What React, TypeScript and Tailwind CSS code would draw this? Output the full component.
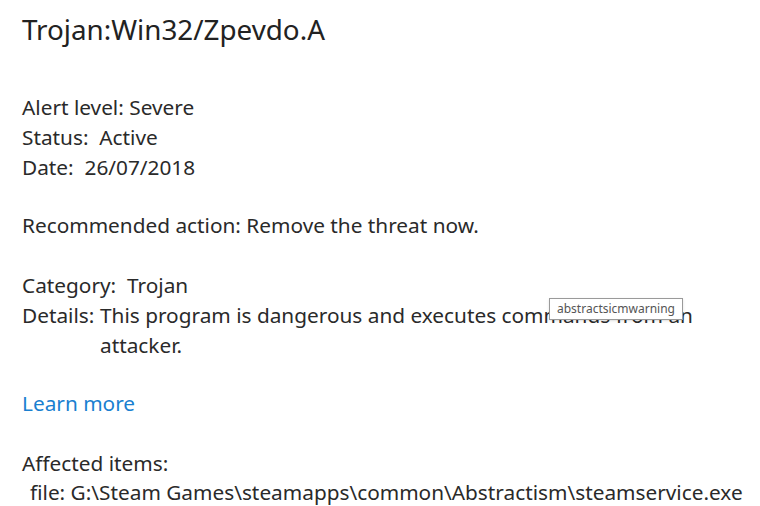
import React from "react";

const threat = {
  name: "Trojan:Win32/Zpevdo.A",
  alertLevel: "Severe",
  status: "Active",
  date: "26/07/2018",
  action: "Remove the threat now.",
  category: "Trojan",
  details: "This program is dangerous and executes commands from an attacker.",
  file: "G:\\Steam Games\\steamapps\\common\\Abstractism\\steamservice.exe",
};

const App = () => {
  return (
    <div
      className="relative w-[760px] h-[506px] overflow-hidden bg-white text-[#2a2a2a] pl-[22px] pt-[11px]"
      style={{fontFamily: '"Noto Sans", "Open Sans", sans-serif'}}
    >
      <h1 className="text-[27.8px] leading-[36px] font-normal text-[#222]">
        {threat.name}
      </h1>

      <div className="mt-[45px] text-[20.8px] leading-[30px]">
        <p>Alert level: {threat.alertLevel}</p>
        <p>Status:&nbsp; {threat.status}</p>
        <p>Date:&nbsp; {threat.date}</p>
      </div>

      <p className="mt-[28px] text-[20.8px] leading-[30px]">
        Recommended action: {threat.action}
      </p>

      <div className="mt-[30px] text-[20.8px] leading-[30px]">
        <p>Category:&nbsp; {threat.category}</p>
        <div className="flex">
          <span className="w-[78px] shrink-0">Details:</span>
          <span className="w-[600px]">{threat.details}</span>
        </div>
      </div>

      <a className="block mt-[28px] text-[20.8px] leading-[30px] text-[#1a7fd0]">
        Learn more
      </a>

      <div className="mt-[30px] text-[20.8px] leading-[30px]">
        <p>Affected items:</p>
        <p className="pl-[8px] -mt-[1px]">file: {threat.file}</p>
      </div>

      <div className="absolute left-[549px] top-[298px] h-[22px] w-[134px] flex items-center justify-center border border-[#9a9a9a] bg-white text-[12px] text-[#555] shadow-sm">
        abstractsicmwarning
      </div>
    </div>
  );
};

export default App;
